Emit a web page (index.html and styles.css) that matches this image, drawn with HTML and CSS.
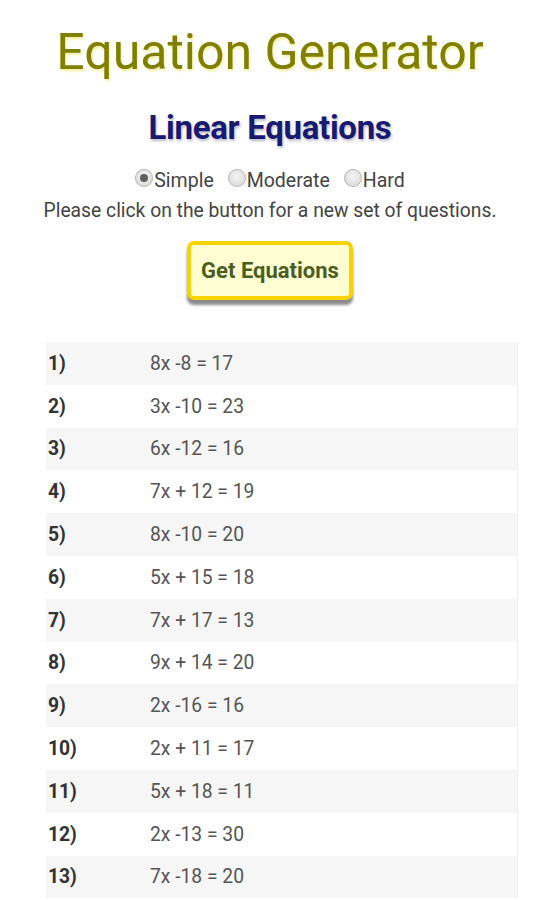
FILE: index.html
```html
<!DOCTYPE html>
<html>
<head>
<meta charset="utf-8">
<link rel="stylesheet" href="styles.css">
</head>
<body>
<div class="page">
  <h1 class="title">Equation Generator</h1>
  <h2 class="subtitle">Linear Equations</h2>
  <div class="levels">
    <label class="opt"><span class="radio checked"></span>Simple</label>
    <label class="opt"><span class="radio"></span>Moderate</label>
    <label class="opt"><span class="radio"></span>Hard</label>
  </div>
  <p class="hint">Please click on the button for a new set of questions.</p>
  <div class="btnwrap"><button class="btn">Get Equations</button></div>
  <div class="table">
    <div class="row odd"><span class="num">1)</span><span class="eq">8x -8 = 17</span></div>
    <div class="row"><span class="num">2)</span><span class="eq">3x -10 = 23</span></div>
    <div class="row odd"><span class="num">3)</span><span class="eq">6x -12 = 16</span></div>
    <div class="row"><span class="num">4)</span><span class="eq">7x + 12 = 19</span></div>
    <div class="row odd"><span class="num">5)</span><span class="eq">8x -10 = 20</span></div>
    <div class="row"><span class="num">6)</span><span class="eq">5x + 15 = 18</span></div>
    <div class="row odd"><span class="num">7)</span><span class="eq">7x + 17 = 13</span></div>
    <div class="row"><span class="num">8)</span><span class="eq">9x + 14 = 20</span></div>
    <div class="row odd"><span class="num">9)</span><span class="eq">2x -16 = 16</span></div>
    <div class="row"><span class="num">10)</span><span class="eq">2x + 11 = 17</span></div>
    <div class="row odd"><span class="num">11)</span><span class="eq">5x + 18 = 11</span></div>
    <div class="row"><span class="num">12)</span><span class="eq">2x -13 = 30</span></div>
    <div class="row odd"><span class="num">13)</span><span class="eq">7x -18 = 20</span></div>
  </div>
</div>
</body>
</html>
```
FILE: styles.css
```css
html, body {
  margin: 0;
  padding: 0;
  background: #ffffff;
}
body {
  font-family: Roboto, "Liberation Sans", sans-serif;
  color: #444444;
  overflow: hidden;
}
.page {
  display: flex;
  flex-direction: column;
  align-items: center;
  padding-top: 23px;
}
.title {
  margin: 0;
  font-size: 50px;
  font-weight: 400;
  line-height: 58px;
  color: #7f7f00;
  text-shadow: 1px 2px 3px #f2ee9a;
}
.subtitle {
  margin: 27px 0 0 0;
  font-size: 33px;
  font-weight: 700;
  line-height: 40px;
  color: #191970;
  text-shadow: 1px 2px 3px #b8b8c8;
  letter-spacing: -0.3px;
}
.levels {
  margin-top: 21px;
  display: flex;
  gap: 14px;
  font-size: 19.5px;
  line-height: 24px;
  color: #444;
}
.opt {
  display: flex;
  align-items: center;
}
.radio {
  width: 18px;
  height: 18px;
  box-sizing: border-box;
  border-radius: 50%;
  border: 1px solid #b4b4b4;
  background: radial-gradient(circle at 50% 40%, #f4f4f4, #d6d6d6);
  margin-right: 1px;
  margin-top: -6px;
  position: relative;
}
.radio.checked::after {
  content: "";
  position: absolute;
  left: 4px;
  top: 4px;
  width: 8px;
  height: 8px;
  border-radius: 50%;
  background: #5e5e5e;
}
.hint {
  margin: 6px 0 0 0;
  font-size: 19.3px;
  line-height: 24px;
  color: #444;
}
.btnwrap {
  margin-top: 18px;
}
.btn {
  font-family: Roboto, "Liberation Sans", sans-serif;
  font-size: 22px;
  font-weight: 700;
  color: #4b5d1f;
  background: #ffffd2;
  border: 4px solid #f8d300;
  border-radius: 7px;
  width: 166px;
  height: 59px;
  padding: 0;
  box-shadow: 0 5px 3px #8a8a8a;
}
.table {
  margin-top: 42px;
  width: 472px;
  align-self: flex-start;
  margin-left: 46px;
  display: flex;
  flex-direction: column;
}
.row {
  height: 42.8px;
  display: flex;
  align-items: center;
  font-size: 19.3px;
  border-right: 1px solid #f0f0f0;
}
.row.odd {
  background: #f6f6f6;
}
.num {
  width: 102px;
  padding-left: 2px;
  font-weight: 700;
  color: #333;
}
.eq {
  color: #555;
}
```
